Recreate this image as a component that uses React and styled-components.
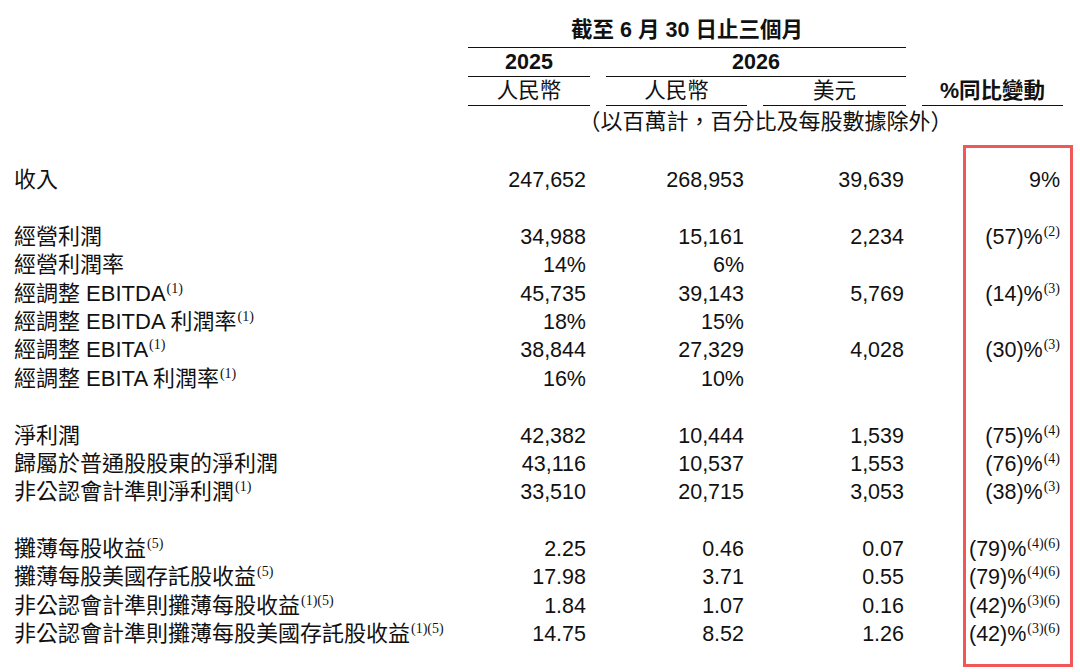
import React from "react";
import styled, { createGlobalStyle } from "styled-components";

const GlobalStyle = createGlobalStyle`
    html, body {
        margin: 0;
        padding: 0;
        background: #ffffff;
    }
    body {
        font-family: "Liberation Sans", "Noto Sans CJK TC", sans-serif;
        color: #111;
    }
`;

const COLS = "438px 122px 141px 143px 141px";

const Page = styled.div`
    position: relative;
    width: 1080px;
    height: 672px;
    padding: 16px 0 0 14px;
    box-sizing: border-box;
    overflow: hidden;
`;

const Head = styled.div`
    display: grid;
    grid-template-columns: ${COLS};
    column-gap: 16px;
    font-size: 21.5px;
    line-height: 28px;
`;

const HeadCell = styled.div`
    grid-column: ${(p) => p.$col};
    text-align: center;
    white-space: nowrap;
    font-size: ${(p) => p.$size || 21.5}px;
    font-weight: ${(p) => (p.$bold ? 700 : 400)};
    border-bottom: ${(p) => (p.$line ? "1.5px solid #111" : "none")};
    padding-top: ${(p) => p.$top || 0}px;
    padding-bottom: ${(p) => p.$bottom || 0}px;
`;

const Body = styled.div`
    display: flex;
    flex-direction: column;
    margin-top: 30px;
`;

const Row = styled.div`
    display: grid;
    grid-template-columns: ${COLS};
    column-gap: 16px;
    height: 28.4px;
    line-height: 28.4px;
    font-size: 21.5px;
`;

const Label = styled.div`
    white-space: nowrap;
    font-size: 22px;
`;

const Num = styled.div`
    text-align: right;
    padding-right: ${(p) => p.$pad ?? 4}px;
    white-space: nowrap;
`;

const Sup = styled.span`
    font-family: "Liberation Serif", serif;
    font-size: 14px;
    line-height: 0;
    vertical-align: 8px;
    margin-left: 1px;
`;

const Highlight = styled.div`
    position: absolute;
    left: 963px;
    top: 145px;
    width: 110px;
    height: 522px;
    border: 3px solid #f25757;
    box-sizing: border-box;
    pointer-events: none;
`;

const rows = [
    { label: "收入", v: ["247,652", "268,953", "39,639"], chg: "9%" },
    null,
    { label: "經營利潤", v: ["34,988", "15,161", "2,234"], chg: "(57)%", cs: "(2)" },
    { label: "經營利潤率", v: ["14%", "6%", ""] },
    { label: "經調整 EBITDA", ls: "(1)", v: ["45,735", "39,143", "5,769"], chg: "(14)%", cs: "(3)" },
    { label: "經調整 EBITDA 利潤率", ls: "(1)", v: ["18%", "15%", ""] },
    { label: "經調整 EBITA", ls: "(1)", v: ["38,844", "27,329", "4,028"], chg: "(30)%", cs: "(3)" },
    { label: "經調整 EBITA 利潤率", ls: "(1)", v: ["16%", "10%", ""] },
    null,
    { label: "淨利潤", v: ["42,382", "10,444", "1,539"], chg: "(75)%", cs: "(4)" },
    { label: "歸屬於普通股股東的淨利潤", v: ["43,116", "10,537", "1,553"], chg: "(76)%", cs: "(4)" },
    { label: "非公認會計準則淨利潤", ls: "(1)", v: ["33,510", "20,715", "3,053"], chg: "(38)%", cs: "(3)" },
    null,
    { label: "攤薄每股收益", ls: "(5)", v: ["2.25", "0.46", "0.07"], chg: "(79)%", cs: "(4)(6)" },
    { label: "攤薄每股美國存託股收益", ls: "(5)", v: ["17.98", "3.71", "0.55"], chg: "(79)%", cs: "(4)(6)" },
    { label: "非公認會計準則攤薄每股收益", ls: "(1)(5)", v: ["1.84", "1.07", "0.16"], chg: "(42)%", cs: "(3)(6)" },
    { label: "非公認會計準則攤薄每股美國存託股收益", ls: "(1)(5)", v: ["14.75", "8.52", "1.26"], chg: "(42)%", cs: "(3)(6)" },
];

const App = () => {
    return (
        <Page>
            <GlobalStyle />
            <Head>
                <HeadCell $col="2 / 5" $bold $line $bottom={3}>截至 6 月 30 日止三個月</HeadCell>
                <HeadCell $col="2 / 3" $bold $line>2025</HeadCell>
                <HeadCell $col="3 / 5" $bold $line>2026</HeadCell>
                <HeadCell $col="2 / 3" $line>人民幣</HeadCell>
                <HeadCell $col="3 / 4" $line>人民幣</HeadCell>
                <HeadCell $col="4 / 5" $line>美元</HeadCell>
                <HeadCell $col="5 / 6" $bold $line>%同比變動</HeadCell>
                <HeadCell $col="2 / 6" $top={2} $size={22}>（以百萬計，百分比及每股數據除外）</HeadCell>
            </Head>
            <Body>
                {rows.map((r, i) =>
                    r ? (
                        <Row key={i}>
                            <Label>
                                {r.label}
                                {r.ls && <Sup>{r.ls}</Sup>}
                            </Label>
                            <Num>{r.v[0]}</Num>
                            <Num $pad={3}>{r.v[1]}</Num>
                            <Num $pad={2}>{r.v[2]}</Num>
                            <Num $pad={3}>
                                {r.chg}
                                {r.cs && <Sup>{r.cs}</Sup>}
                            </Num>
                        </Row>
                    ) : (
                        <Row key={i} />
                    )
                )}
            </Body>
            <Highlight />
        </Page>
    );
};

export default App;
